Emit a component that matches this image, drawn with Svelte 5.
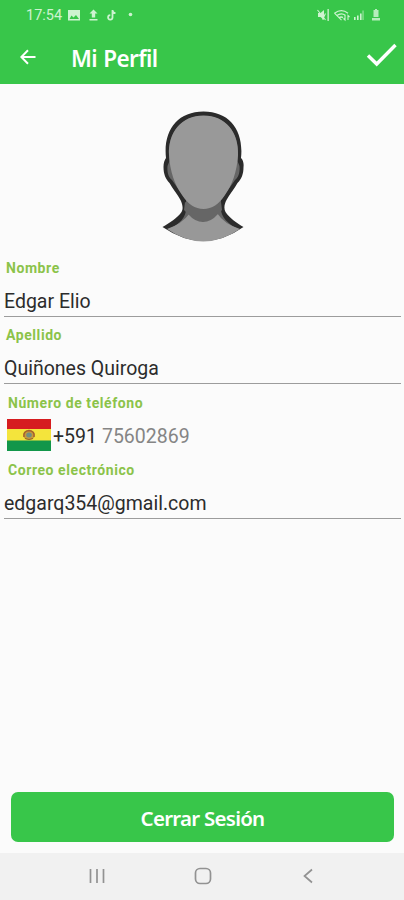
<script lang="ts">
  let firstName = "Edgar Elio";
  let lastName = "Quiñones Quiroga";
  let phone = "75602869";
  let email = "edgarq354@gmail.com";
</script>

<div class="screen">
  <header>
    <div class="status">
      <span class="clock">17:54</span>
      <svg class="notifications" width="68" height="16" viewBox="0 0 68 16">
        <path
          d="M1 3h12v10.500H1zM2.500 12h9.500L9 8 6.500 10.500 4.500 8.500z"
          fill="currentColor"
          fill-rule="evenodd"
        />
        <path d="M26.500 2.500l4 4h-2.300v4h-3.400v-4h-2.300zM22.500 12h8v1.500h-8z" fill="currentColor" />
        <path
          d="M45.500 3v7.500a2.200 2.200 0 1 1-2.200-2.300M45.500 3.500c.4 1.700 1.500 2.500 3 2.700"
          fill="none"
          stroke="currentColor"
          stroke-width="1.800"
        />
        <circle cx="63.500" cy="7.500" r="1.800" fill="currentColor" />
      </svg>
      <svg class="signals" width="68" height="16" viewBox="0 0 68 16">
        <g fill="currentColor">
          <path d="M2 6h2.500L8 3v10L4.500 10H2z" />
          <path d="M11.500 2h1.300v12h-1.300z" />
          <path d="M38 13v-3h1.600v3zM41 13V8.500h1.600V13zM44 13V6.500h1.600V13z" />
          <path d="M46.300 13V3.500h1.500V13z" opacity="0.5" />
          <path d="M57.500 3h1.500V2h2v1h1.500v7h-5zM56 11h8v2.500h-8z" opacity="0.85" />
        </g>
        <path d="M1.500 3l8 10M9.500 6.500l-3 6" fill="none" stroke="currentColor" stroke-width="1.100" />
        <g fill="none" stroke="currentColor" stroke-width="1.300">
          <path d="M18.500 6.200q7-5 13.500 0M20.800 8.500q4.500-3.200 8.500-.2M23 10.800q2-1.500 4-.2" />
          <path d="M18.500 6.200l7 7M29 8v5l-1.500-1.500M32 13V8.500l1.500 1.500" stroke-width="1.100" />
        </g>
      </svg>
    </div>
    <div class="toolbar">
      <svg class="back" width="16" height="16" viewBox="0 0 16 16">
        <path d="M15.500 8H1.500M8 1.200L1.300 8 8 14.800" />
      </svg>
      <h1>Mi Perfil</h1>
      <svg class="save" width="32" height="26" viewBox="0 0 32 26">
        <path d="M2 13.500l8.700 8.500L29.500 3" />
      </svg>
    </div>
  </header>

  <main>
    <svg class="avatar" width="110" height="150" viewBox="0 0 110 150">
      <path
        d="M12.500 127c7-4 15-9 19-15 2-3 1-8-1-12-3-6-8-11-11-17-4-4-6-9-6-16 0-4 1-7 2.500-9C13 31 27 11.500 53.500 11.500S94 31 91 58c2 2 3 5 2.500 9 0 7-2 12-6 16-3 6-8 11-11 17-2 4-3 8-1 12 4 6 11 11 18 15q-40 28-81 0z"
        fill="#2b2b2b"
      />
      <path
        d="M19 129c11-5 17-12 17-20v-9L22 80c-4-3-5-9-4.500-14l2-5C16 34 30 16 53.500 16S91 34 87.500 61l2 5c.5 5-.5 11-4.500 14l-14 20v9c0 8 7 15 17 20q-34 22-69 0z"
        fill="#666"
      />
      <path d="M17 129q15-5 23-16l13 9 14-9q7 11 23 16-37 25-73 0z" fill="#989898" />
      <path d="M35 102l-1 8 4 4q7 8 15 8t15-8l4-4-1-8-18 8z" fill="#666" />
      <path
        d="M53.500 15.500C76 15.500 89 33 88 55c-1 17-6 30-13 40-6 9-13 14-21.500 14S38 104 32 95C25 85 20 72 19 55c-1-22 12-39.500 34.500-39.500z"
        fill="#999"
      />
    </svg>

    <div class="field">
      <div class="label">Nombre</div>
      <div class="value line">{firstName}</div>
    </div>
    <div class="field">
      <div class="label">Apellido</div>
      <div class="value line">{lastName}</div>
    </div>
    <div class="field">
      <div class="label indent">Número de teléfono</div>
      <div class="value phone">
        <svg class="flag" width="44" height="32" viewBox="0 0 44 32">
          <path d="M0 0h44v11H0z" fill="#d61c20" />
          <path d="M0 10h44v12H0z" fill="#f4e43c" />
          <path d="M0 21.500h44V32H0z" fill="#12964a" />
          <ellipse cx="22" cy="16" rx="6" ry="4.800" fill="#c59a3b" />
          <path d="M17 18q-1-6 5-6.500 6 .5 5 6.500" fill="none" stroke="#a5602c" stroke-width="1.500" />
          <ellipse cx="22" cy="16" rx="2.800" ry="2.500" fill="#718e82" />
          <path d="M18 19.500q4 2 8 0" fill="none" stroke="#946129" />
        </svg>
        <span class="prefix">+591</span>
        <span class="number">{phone}</span>
      </div>
    </div>
    <div class="field">
      <div class="label indent">Correo electrónico</div>
      <div class="value line">{email}</div>
    </div>

    <button>Cerrar Sesión</button>
  </main>

  <nav>
    <svg width="16" height="16" viewBox="0 0 16 16">
      <path d="M1.500 1v14M8 1v14M14.500 1v14" />
    </svg>
    <svg width="18" height="18" viewBox="0 0 18 18">
      <rect x="1.500" y="1.500" width="15" height="15" rx="4.500" />
    </svg>
    <svg width="16" height="16" viewBox="0 0 16 16">
      <path d="M12 1.500L4.500 8l7.500 6.500" />
    </svg>
  </nav>
</div>

<style>
  :global(body) {
    margin: 0;
  }
  .screen {
    width: 404px;
    height: 900px;
    display: flex;
    flex-direction: column;
    overflow: hidden;
    background: #fbfbfb;
    font-family: Roboto, sans-serif;
  }
  header {
    flex: 0 0 84px;
    background: #38c64a;
    color: #fff;
  }
  .status {
    display: flex;
    align-items: center;
    height: 30px;
    padding: 0 20px 0 26px;
    color: #cdf3d0;
  }
  .clock {
    width: 41px;
    font-size: 14.5px;
  }
  .signals {
    margin-left: auto;
  }
  .toolbar {
    display: flex;
    align-items: center;
    height: 54px;
    padding: 0 6px 0 20px;
  }
  .toolbar svg {
    fill: none;
    stroke: #fff;
  }
  .back {
    stroke-width: 2;
  }
  .save {
    margin: -4px 0 0 auto;
    stroke-width: 3.4;
  }
  h1 {
    margin: 2px 0 0 35px;
    font: 600 22.5px "Noto Sans", sans-serif;
    letter-spacing: -0.6px;
    word-spacing: 1px;
  }
  main {
    flex: 1;
    display: flex;
    flex-direction: column;
    padding: 16px 4px 11px;
  }
  .avatar {
    display: block;
    flex: none;
    margin: 0 auto 0 146px;
  }
  .field {
    height: 67.4px;
  }
  .label {
    height: 36px;
    padding-left: 2px;
    font-size: 14px;
    font-weight: 700;
    line-height: 37px;
    letter-spacing: 0.57px;
    color: #8bc34a;
  }
  .indent {
    padding-left: 4px;
  }
  .value {
    box-sizing: border-box;
    height: 31px;
    font-size: 19.5px;
    line-height: 31px;
    color: #2c2c2c;
    white-space: nowrap;
  }
  .line {
    margin-right: -1px;
    border-bottom: 1px solid #9c9c9c;
  }
  .phone {
    display: flex;
    align-items: center;
  }
  .flag {
    margin: -2px 2px 0 3px;
  }
  .number {
    margin-left: 5px;
    color: #858585;
  }
  button {
    height: 50px;
    margin: auto 6px 0 7px;
    padding: 2px 0 0;
    border: 0;
    border-radius: 7px;
    background: #38c64a;
    color: #fff;
    font: 600 20.5px "Noto Sans", sans-serif;
    letter-spacing: -0.75px;
  }
  nav {
    flex: 0 0 47px;
    display: flex;
    align-items: center;
    justify-content: space-between;
    box-sizing: border-box;
    padding: 0 88px 2px 89px;
    background: #f1f1f1;
  }
  nav svg {
    fill: none;
    stroke: #929292;
    stroke-width: 1.7;
  }
</style>
